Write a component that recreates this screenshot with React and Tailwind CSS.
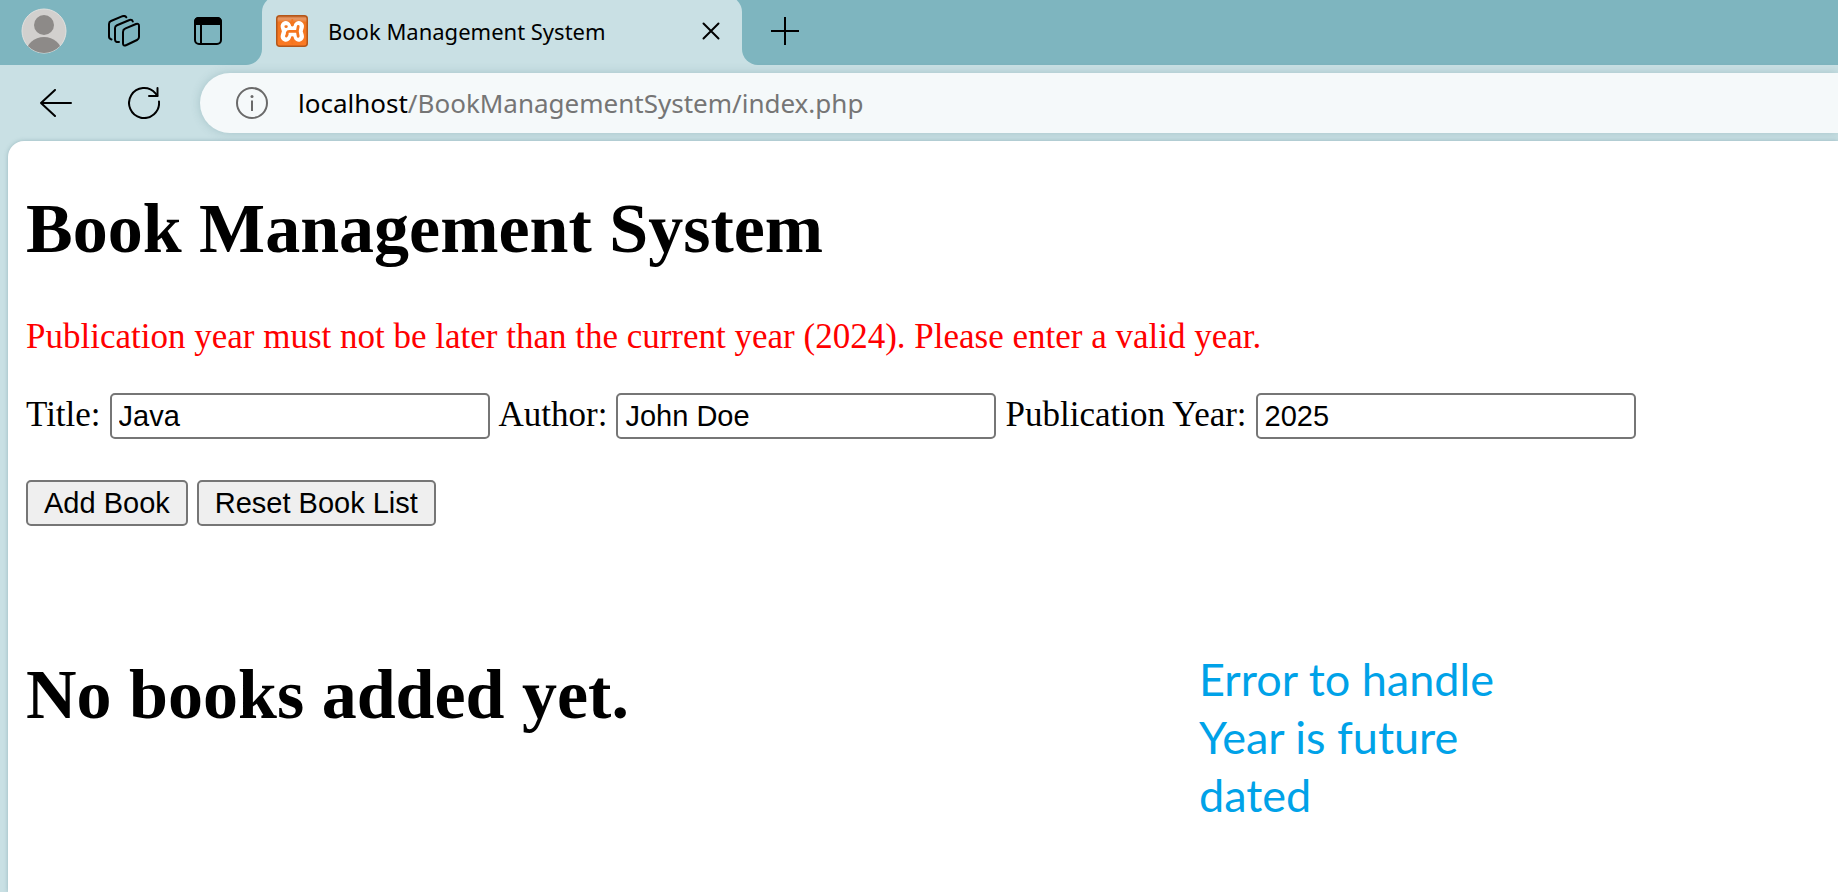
import { useState } from "react";

const stroke = {
  fill: "none",
  stroke: "currentColor",
  strokeWidth: 2,
  strokeLinecap: "round",
  strokeLinejoin: "round",
};

function Avatar() {
  return (
    <svg width="46" height="46" viewBox="0 0 46 46" aria-hidden="true">
      <defs>
        <clipPath id="avatar-clip">
          <circle cx="23" cy="23" r="22" />
        </clipPath>
      </defs>
      <circle cx="23" cy="23" r="22" fill="#d2d0ce" stroke="#e2e1df" />
      <g clipPath="url(#avatar-clip)" fill="#8d8a88">
        <circle cx="23" cy="17" r="10" />
        <ellipse cx="23" cy="45" rx="18" ry="16" />
      </g>
    </svg>
  );
}

function WorkspacesIcon() {
  return (
    <svg width="32" height="32" viewBox="0 0 32 32" aria-hidden="true" {...stroke}>
      <path d="M3.5 24.5 Q1 23.8 1 21.5 V9 Q1 6.8 3 6 L14.5 1.2 Q17 .3 18.3 2.3" />
      <path d="M11 27 Q7 27.6 7 24.5 V13 Q7 11 9 10.2 L21.5 5 Q24 4.2 24.8 6.5" />
      <path d="M15 17 Q15 14.5 17 13.7 L28 9 Q31 8 31 11 V22 Q31 24 29 25 L18.5 30 Q15 31.5 15 28.5 Z" />
    </svg>
  );
}

function TabActionsIcon() {
  return (
    <svg width="28" height="28" viewBox="0 0 28 28" aria-hidden="true">
      <rect x="1" y="1" width="26" height="26" rx="4" {...stroke} />
      <path d="M0 8 V5 Q0 0 5 0 H23 Q28 0 28 5 V8 Z" fill="currentColor" />
      <path d="M7 8 V27" {...stroke} />
    </svg>
  );
}

function XamppIcon() {
  return (
    <svg width="32" height="32" viewBox="0 0 32 32" aria-hidden="true">
      <defs>
        <linearGradient id="xampp-gloss" x1="0" y1="0" x2="0" y2="1">
          <stop offset="0" stopColor="#c96a2b" />
          <stop offset=".1" stopColor="#e89a68" />
          <stop offset=".22" stopColor="#f0741d" />
          <stop offset="1" stopColor="#fb7a24" />
        </linearGradient>
      </defs>
      <rect x=".75" y=".75" width="30.5" height="30.5" rx="3" fill="url(#xampp-gloss)" stroke="#b4571a" strokeWidth="1.5" />
      <g fill="none" strokeLinecap="round" strokeLinejoin="round">
        <path d="M9.8 11.3 L11.3 16.3 L9.8 21.5 M22.8 11.3 L21.3 16.3 L22.8 21.5 M11.3 16.3 H21.3" stroke="#fff" strokeWidth="10.4" />
        <path d="M16.3 5 V10.5 M16.3 28 V22.5" stroke="#f5761f" strokeWidth="2" />
        <path d="M9.8 11.6 H10.4 M10.4 21 Q11.5 19.5 11.3 17.5 Q11.6 16.3 13.3 16.3 H21.3 M22.2 11.5 L21.3 16.3 L22.2 21.3" stroke="#f5761f" strokeWidth="2.8" />
      </g>
    </svg>
  );
}

function CloseIcon() {
  return (
    <svg width="18" height="18" viewBox="0 0 18 18" aria-hidden="true" {...stroke}>
      <path d="M1.5 1.5 L16.5 16.5 M16.5 1.5 L1.5 16.5" />
    </svg>
  );
}

function PlusIcon() {
  return (
    <svg width="28" height="28" viewBox="0 0 28 28" aria-hidden="true" {...stroke} strokeLinecap="butt">
      <path d="M14 0 V28 M0 14 H28" />
    </svg>
  );
}

function BackIcon() {
  return (
    <svg width="32" height="28" viewBox="0 0 32 28" aria-hidden="true" {...stroke}>
      <path d="M15 1 L1 14 L15 27 M1 14 H31" />
    </svg>
  );
}

function RefreshIcon() {
  return (
    <svg width="32" height="32" viewBox="0 0 32 32" aria-hidden="true" {...stroke}>
      <path d="M31 14.5 A15 15 0 1 1 27.5 6.3 L29.3 9" />
      <path d="M29.5 1 V9 H21" />
    </svg>
  );
}

function InfoIcon() {
  return (
    <svg width="32" height="32" viewBox="0 0 32 32" aria-hidden="true" {...stroke}>
      <circle cx="16" cy="16" r="15" />
      <path d="M16 13.5 V24" strokeLinecap="butt" />
      <circle cx="16" cy="9.5" r="1.5" fill="currentColor" stroke="none" />
    </svg>
  );
}

function TabStrip() {
  return (
    <div className="flex h-[65px] overflow-hidden">
      <div className="flex w-[262px] shrink-0 items-center rounded-br-2xl bg-[#7eb5bf] pb-[3px] pl-[21px]">
        <button type="button" aria-label="Profile" className="mr-[41px]">
          <Avatar />
        </button>
        <button type="button" aria-label="Workspaces" className="mr-[54px]">
          <WorkspacesIcon />
        </button>
        <button type="button" aria-label="Tab actions">
          <TabActionsIcon />
        </button>
      </div>
      <div className="w-[480px] shrink-0 bg-[#7eb5bf]">
        <div className="-mt-1 flex h-[69px] items-center rounded-t-2xl bg-[#c9e0e4] pr-[22px] pl-[14px]">
          <XamppIcon />
          <span className="ml-5 flex-1 text-[22px] leading-8 whitespace-nowrap">Book Management System</span>
          <button type="button" aria-label="Close tab">
            <CloseIcon />
          </button>
        </div>
      </div>
      <div className="flex flex-1 items-center rounded-bl-2xl bg-[#7eb5bf] pb-1 pl-[29px]">
        <button type="button" aria-label="New tab">
          <PlusIcon />
        </button>
      </div>
    </div>
  );
}

function Toolbar() {
  return (
    <div className="flex items-center py-2 pl-10">
      <button type="button" aria-label="Back" className="mr-14">
        <BackIcon />
      </button>
      <button type="button" aria-label="Refresh" className="mr-10">
        <RefreshIcon />
      </button>
      <div className="flex h-[60px] flex-1 items-center rounded-l-full bg-[#f5f9fa] pl-9 shadow-[0_0_10px_rgba(60,110,120,0.25)]">
        <button type="button" aria-label="Site information" className="mr-[30px] text-[#6a6a6a]">
          <InfoIcon />
        </button>
        <span className="text-[26px] leading-9 whitespace-nowrap text-[#757575]">
          <span className="text-black">localhost</span>/BookManagementSystem/index.php
        </span>
      </div>
    </div>
  );
}

function Field({ id, label, value, onChange }) {
  return (
    <div className="flex items-baseline gap-[9px]">
      <label htmlFor={id}>{label}</label>
      <input
        id={id}
        type="text"
        value={value}
        onChange={(e) => onChange(e.target.value)}
        className="h-[46px] w-[380px] rounded-[5px] border-2 border-[#767676] bg-white px-[7px] font-['Liberation_Sans',Arial,sans-serif] text-[29px]"
      />
    </div>
  );
}

function FormButton({ type, children }) {
  return (
    <button
      type={type}
      className="h-[46px] rounded-[5px] border-2 border-[#767676] bg-[#efefef] px-4 font-['Liberation_Sans',Arial,sans-serif] text-[29px] leading-9"
    >
      {children}
    </button>
  );
}

export default function App() {
  const [title, setTitle] = useState("Java");
  const [author, setAuthor] = useState("John Doe");
  const [year, setYear] = useState("2025");

  return (
    <div className="flex min-h-screen flex-col bg-[#c9e0e4] font-['Noto_Sans','Open_Sans',sans-serif] text-black">
      <header>
        <TabStrip />
        <Toolbar />
      </header>
      <main className="ml-2 flex-1 rounded-tl-2xl bg-white pt-[48px] pl-[18px] font-['Liberation_Serif','Times_New_Roman',serif] text-[35px] leading-10 shadow-[0_0_4px_rgba(60,110,120,0.35)]">
        <h1 className="text-[70px] leading-[80px] font-bold">Book Management System</h1>
        <p className="mt-12 text-[#ff0000]">
          Publication year must not be later than the current year (2024). Please enter a valid year.
        </p>
        <form onSubmit={(e) => e.preventDefault()} className="mt-9">
          <div className="flex flex-wrap items-baseline gap-x-[9px]">
            <Field id="title" label="Title:" value={title} onChange={setTitle} />
            <Field id="author" label="Author:" value={author} onChange={setAuthor} />
            <Field id="year" label="Publication Year:" value={year} onChange={setYear} />
          </div>
          <div className="mt-[41px] flex gap-[9px]">
            <FormButton type="submit">Add Book</FormButton>
            <FormButton type="reset">Reset Book List</FormButton>
          </div>
        </form>
        <div className="mt-[124px] flex items-start">
          <h1 className="mt-[5px] w-[1173px] text-[70px] leading-[80px] font-bold">No books added yet.</h1>
          <p className="w-[320px] font-['Lato',sans-serif] text-[45px] leading-[58px] text-[#00a2e8]">
            Error to handle Year is future dated
          </p>
        </div>
      </main>
    </div>
  );
}
